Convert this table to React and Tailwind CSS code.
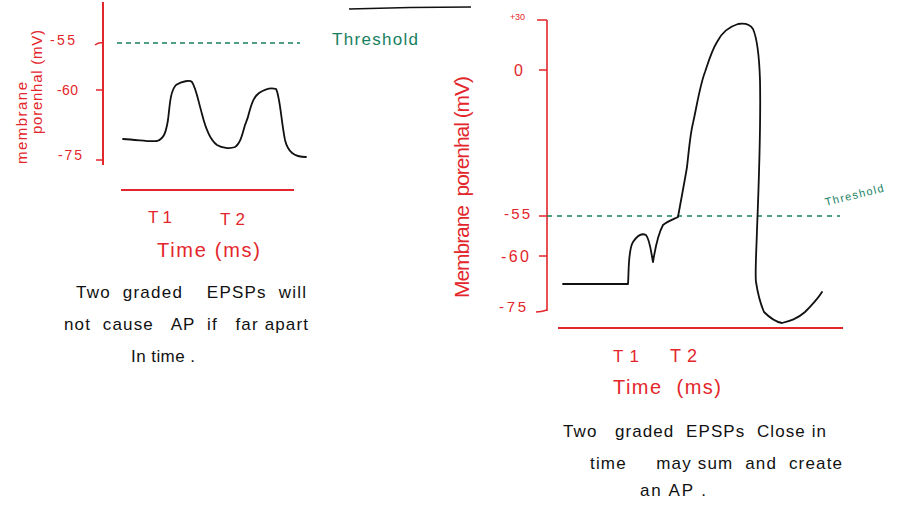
const RED = "#e3262b";
const GREEN = "#17805e";
const INK = "#111111";

function Label({ x, y, w, size = 14, color = RED, rotate, children }) {
  return (
    <text
      x={x}
      y={y}
      fontSize={size}
      fill={color}
      textLength={w}
      lengthAdjust="spacing"
      xmlSpace="preserve"
      transform={rotate ? `rotate(${rotate} ${x} ${y})` : undefined}
      style={{ fontFamily: '"Liberation Sans", Arial, sans-serif', whiteSpace: "pre" }}
    >
      {children}
    </text>
  );
}

function LeftChart() {
  return (
    <g>
      {/* axes */}
      <path d="M103 2 L103 165" stroke={RED} strokeWidth="2" fill="none" />
      <path d="M95 45 Q99 42 103 43 M96 90 L103 90 M96 160 L103 160" stroke={RED} strokeWidth="1.5" fill="none" />
      <path d="M121 190 L294 190" stroke={RED} strokeWidth="2" fill="none" />
      <path d="M117 43 L300 43" stroke={GREEN} strokeWidth="1.3" strokeDasharray="5 4" fill="none" />

      <Label x={50} y={45} w={25} size={14}>-55</Label>
      <Label x={57} y={95} w={21} size={14}>-60</Label>
      <Label x={58} y={160} w={24} size={14}>-75</Label>
      <Label x={27} y={164} w={82} size={15} rotate={-90}>membrane</Label>
      <Label x={42} y={134} w={104} size={15} rotate={-90}>porenhal (mV)</Label>
      <Label x={332} y={45} w={86} size={17} color={GREEN}>Threshold</Label>

      <path
        d="M123 139 C140 140 150 142 157 141 C164 139 166 132 168 120 C170 104 170 92 176 85 C182 81 190 80 192 82 C196 88 198 100 202 114 C206 130 210 140 217 145 C222 148 230 149 235 147 C240 144 242 136 245 125 C247 120 248 118 249 113 C252 102 254 97 259 93 C265 89 270 87 276 89 C280 96 281 120 285 140 C288 152 294 157 306 157"
        stroke={INK}
        strokeWidth="1.8"
        fill="none"
        strokeLinecap="round"
      />

      <Label x={148} y={223} w={24} size={17}>T1</Label>
      <Label x={220} y={225} w={25} size={17}>T2</Label>
      <Label x={157} y={257} w={103} size={20}>Time (ms)</Label>

      <Label x={76} y={298} w={230} size={17} color={INK}>Two  graded    EPSPs  will</Label>
      <Label x={64} y={330} w={244} size={17} color={INK}>not  cause   AP  if   far apart</Label>
      <Label x={131} y={362} w={64} size={17} color={INK}>In time .</Label>
    </g>
  );
}

function RightChart() {
  return (
    <g>
      <path d="M349 9 Q410 7 471 7" stroke={INK} strokeWidth="1.3" fill="none" />

      <path d="M547 20 L547 311" stroke={RED} strokeWidth="1.6" fill="none" />
      <path d="M537 20 L547 20 M539 70 L547 70 M539 216 L547 216 M539 256 L547 256 M536 312 Q541 312 547 310" stroke={RED} strokeWidth="1.5" fill="none" />
      <path d="M558 328 L843 328" stroke={RED} strokeWidth="1.8" fill="none" />
      <path d="M547 216 L840 216" stroke={GREEN} strokeWidth="1.3" strokeDasharray="5 5" fill="none" />

      <Label x={510} y={20} w={15} size={9}>+30</Label>
      <Label x={514} y={76} w={11} size={16}>0</Label>
      <Label x={504} y={219} w={26} size={15}>-55</Label>
      <Label x={501} y={262} w={28} size={16}>-60</Label>
      <Label x={499} y={312} w={27} size={15}>-75</Label>
      <Label x={469} y={298} w={222} size={21} rotate={-90}>Membrane  porenhal (mV)</Label>
      <Label x={826} y={206} w={60} size={11} color={GREEN} rotate={-14}>Threshold</Label>

      <path
        d="M563 284 L628 284 C629 270 628 250 633 242 C637 236 642 233 646 235 C650 240 651 252 653 262 C655 250 657 236 663 225 C668 221 674 219 678 217 C681 200 684 185 687 167 C689 150 690 135 693 123 C697 105 700 85 705 72 C709 60 712 50 717 42 C722 32 728 27 738 24 C745 23 750 24 753 29 C757 38 759 50 760 80 C761 130 759 180 757 230 C756 260 755 275 756 282 C758 295 761 305 764 312 C770 318 776 322 782 323 C790 321 797 319 805 312 C812 305 817 300 822 292"
        stroke={INK}
        strokeWidth="1.8"
        fill="none"
        strokeLinecap="round"
        strokeLinejoin="round"
      />

      <Label x={613} y={362} w={26} size={17}>T1</Label>
      <Label x={670} y={362} w={27} size={18}>T2</Label>
      <Label x={613} y={394} w={108} size={20}>Time  (ms)</Label>

      <Label x={563} y={437} w={263} size={17} color={INK}>Two   graded  EPSPs  Close in</Label>
      <Label x={590} y={469} w={252} size={17} color={INK}>time     may sum  and  create</Label>
      <Label x={640} y={496} w={66} size={17} color={INK}>an AP .</Label>
    </g>
  );
}

export default function App() {
  return (
    <div className="relative w-[900px] h-[514px] bg-white overflow-hidden">
      <svg width="900" height="514" viewBox="0 0 900 514" className="block">
        <LeftChart />
        <RightChart />
      </svg>
    </div>
  );
}
